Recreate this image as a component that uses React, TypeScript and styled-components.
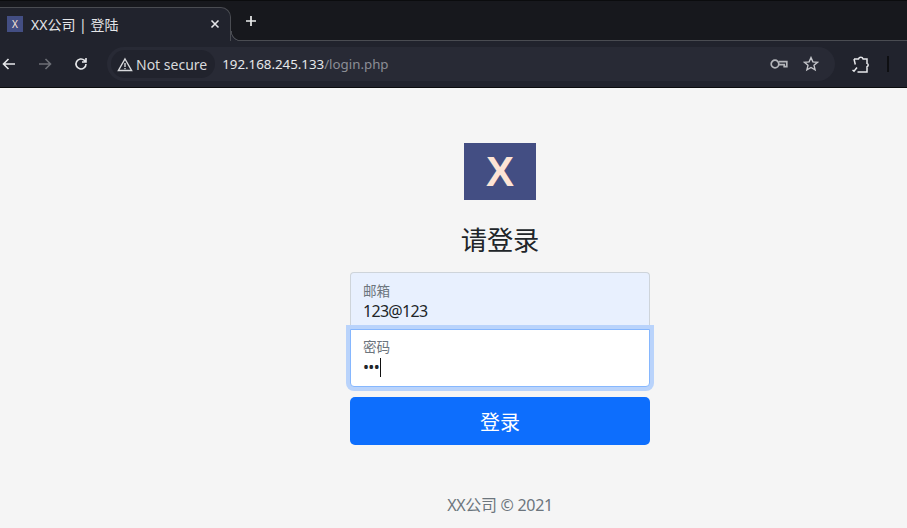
import styled, { createGlobalStyle } from 'styled-components';

const GlobalStyle = createGlobalStyle`
  html, body {
    margin: 0;
    padding: 0;
    height: 100%;
    overflow: hidden;
    background: #f5f5f5;
  }
  * {
    box-sizing: border-box;
  }
`;

const Page = styled.div`
  width: 907px;
  height: 528px;
  display: flex;
  flex-direction: column;
  font-family: 'Noto Sans', 'Noto Sans CJK SC', sans-serif;
`;

// browser tab strip
const TabStrip = styled.div`
  height: 41px;
  flex: none;
  background: #17181d;
  border-top: 1px solid #0b0c0e;
  border-bottom: 1px solid #4a4c52;
  display: flex;
  align-items: flex-end;
`;

const Tab = styled.div`
  position: relative;
  width: 231px;
  height: 34px;
  margin-bottom: -1px;
  background: #21232d;
  border: 1px solid #4a4c52;
  border-bottom: none;
  border-left: none;
  border-radius: 0 10px 0 0;
  display: flex;
  align-items: center;
  padding: 0 10px 1px 7px;
  color: #e4e5e8;
  font-size: 14px;

  &::after {
    content: '';
    position: absolute;
    right: -11px;
    bottom: 0;
    width: 10px;
    height: 10px;
    background: radial-gradient(circle at 100% 0, transparent 9px, #4a4c52 9.5px, #4a4c52 10px, #21232d 10.5px);
  }
`;

const Favicon = styled.div`
  width: 16px;
  height: 16px;
  background: #434e83;
  color: #fde7da;
  font-size: 10px;
  line-height: 16px;
  text-align: center;
  margin-right: 8px;
  flex: none;
`;

const TabTitle = styled.span`
  flex: 1;
  white-space: nowrap;
`;

const NewTab = styled.div`
  margin: 0 0 9px 14px;
  height: 20px;
  display: flex;
  align-items: center;
`;

const Toolbar = styled.div`
  height: 47px;
  flex: none;
  background: #21232d;
  border-bottom: 1px solid #0b0c0e;
  display: flex;
  align-items: center;
  padding-left: 1px;
`;

const NavIcon = styled.svg<{ $gap: number }>`
  flex: none;
  margin-right: ${(props) => props.$gap}px;
`;

const Omnibox = styled.div`
  width: 728px;
  height: 34px;
  border-radius: 17px;
  background: #282a35;
  display: flex;
  align-items: center;
  padding-left: 4px;
  margin-left: 18px;
  font-size: 14px;
  flex: none;
`;

const SecurityChip = styled.div`
  height: 28px;
  border-radius: 14px;
  background: #21232d;
  color: #d8d9dc;
  display: flex;
  align-items: center;
  gap: 3px;
  padding: 0 8px 0 6px;
  white-space: nowrap;
`;

const Host = styled.span`
  margin-left: 7px;
  font-size: 13.3px;
  color: #e6e7ea;
  white-space: nowrap;
`;

const UrlPath = styled.span`
  color: #8c8e95;
`;

const OmniActions = styled.div`
  margin-left: auto;
  display: flex;
  align-items: center;
  gap: 15px;
  padding-right: 16px;
`;

const ExtensionIcon = styled.svg`
  margin-left: 17px;
  flex: none;
`;

const ToolbarDivider = styled.div`
  width: 2px;
  height: 16px;
  margin-left: 17px;
  background: #0e0f12;
  flex: none;
`;

// login form
const Main = styled.main`
  flex: 1;
  display: flex;
  flex-direction: column;
  align-items: center;
  padding: 55px 0 0 93px;
`;

const Logo = styled.div`
  width: 72px;
  height: 57px;
  background: #434e83;
  color: #fde4d5;
  font-family: 'Liberation Sans', sans-serif;
  font-size: 42px;
  font-weight: 700;
  line-height: 57px;
  text-align: center;
`;

const Title = styled.h1`
  margin: 24px 0 16px;
  font-size: 26.24px;
  font-weight: 400;
  line-height: 32px;
  color: #212529;
`;

const Form = styled.div`
  width: 300px;
  display: flex;
  flex-direction: column;
`;

const EmailField = styled.div`
  height: 58px;
  padding: 9px 12px 0;
  background: #e8f0fe;
  border: 1px solid #ced4da;
  border-bottom: none;
  border-radius: 4px 4px 0 0;
`;

const PasswordField = styled.div`
  position: relative;
  height: 58px;
  margin-top: -1px;
  padding: 8px 12px 0;
  background: #fff;
  border: 1px solid #86b7fe;
  border-radius: 0 0 4px 4px;
  box-shadow: 0 0 0 4px #b9d3fb;
`;

const FieldLabel = styled.div`
  font-size: 13.6px;
  line-height: 18px;
  color: #6c757d;
`;

const FieldValue = styled.div`
  font-size: 16px;
  line-height: 22px;
  letter-spacing: -0.7px;
  color: #212529;
  display: flex;
  align-items: center;
`;

const Caret = styled.span`
  width: 1px;
  height: 19px;
  margin-left: 1px;
  background: #111;
`;

const SubmitButton = styled.button`
  height: 48px;
  margin-top: 10px;
  border: none;
  border-radius: 5px;
  background: #0d6efd;
  color: #fff;
  font-family: inherit;
  font-size: 20px;
`;

const Footer = styled.p`
  margin: 48px 0 0;
  font-size: 16px;
  line-height: 24px;
  letter-spacing: -0.3px;
  color: #6c757d;
`;

export default function App() {
  return (
    <Page>
      <GlobalStyle />
      <TabStrip>
        <Tab>
          <Favicon>X</Favicon>
          <TabTitle>XX公司 | 登陆</TabTitle>
          <svg width="10" height="10" viewBox="0 0 10 10" fill="none" stroke="#e4e5e8" strokeWidth="1.6">
            <path d="M1.5 1.5l7 7M8.5 1.5l-7 7" />
          </svg>
        </Tab>
        <NewTab>
          <svg width="12" height="12" viewBox="0 0 12 12" fill="none" stroke="#eceded" strokeWidth="1.7">
            <path d="M6 1v10M1 6h10" />
          </svg>
        </NewTab>
      </TabStrip>
      <Toolbar>
        <NavIcon $gap={20} width="16" height="16" viewBox="0 0 16 16" fill="none" stroke="#e6e7ea" strokeWidth="1.6">
          <path d="M14 8H2.5M7.5 3l-5 5 5 5" />
        </NavIcon>
        <NavIcon $gap={20} width="16" height="16" viewBox="0 0 16 16" fill="none" stroke="#6d6f76" strokeWidth="1.6">
          <path d="M2 8h11.5M8.5 3l5 5-5 5" />
        </NavIcon>
        <NavIcon $gap={0} width="16" height="16" viewBox="0 0 16 16" fill="none" stroke="#e6e7ea" strokeWidth="1.6">
          <path d="M13 8a5 5 0 1 1-1.5-3.6L13 6M13 2v4H9" />
        </NavIcon>
        <Omnibox>
          <SecurityChip>
            <svg width="16" height="15" viewBox="0 0 16 15" fill="none" stroke="#d8d9dc" strokeWidth="1.4">
              <path d="M8 2L14.6 13.5H1.4Z" />
              <path d="M8 6v4M8 11v1.2" />
            </svg>
            Not secure
          </SecurityChip>
          <Host>
            192.168.245.133<UrlPath>/login.php</UrlPath>
          </Host>
          <OmniActions>
            <svg width="18" height="12" viewBox="0 0 18 12" fill="none" stroke="#b4b5ba" strokeWidth="1.7">
              <circle cx="5" cy="6" r="3.8" />
              <path d="M8.8 3.6h8v5h-2.6v-2h-5.4" />
            </svg>
            <svg width="16" height="16" viewBox="0 0 16 16" fill="none" stroke="#c4c5ca" strokeWidth="1.4">
              <path d="M8 1.6l1.9 4.3 4.6.4-3.5 3 1.1 4.6L8 11.5l-4.1 2.4L5 9.3l-3.5-3 4.6-.4Z" />
            </svg>
          </OmniActions>
        </Omnibox>
        <ExtensionIcon width="18" height="17" viewBox="0 0 18 17" fill="none" stroke="#e6e7ea" strokeWidth="1.5">
          <path d="M2 3h4.5a2.4 2.4 0 0 1 4.6 0H15v4.4a1.8 1.8 0 0 1 0 3.4V16H5.5M2 3l1.3 5.5M.5 14l1.5 1.2L5 11.5" />
        </ExtensionIcon>
        <ToolbarDivider />
      </Toolbar>
      <Main>
        <Logo>X</Logo>
        <Title>请登录</Title>
        <Form>
          <EmailField>
            <FieldLabel>邮箱</FieldLabel>
            <FieldValue>123@123</FieldValue>
          </EmailField>
          <PasswordField>
            <FieldLabel>密码</FieldLabel>
            <FieldValue>
              •••
              <Caret />
            </FieldValue>
          </PasswordField>
          <SubmitButton>登录</SubmitButton>
        </Form>
        <Footer>XX公司 © 2021</Footer>
      </Main>
    </Page>
  );
}
